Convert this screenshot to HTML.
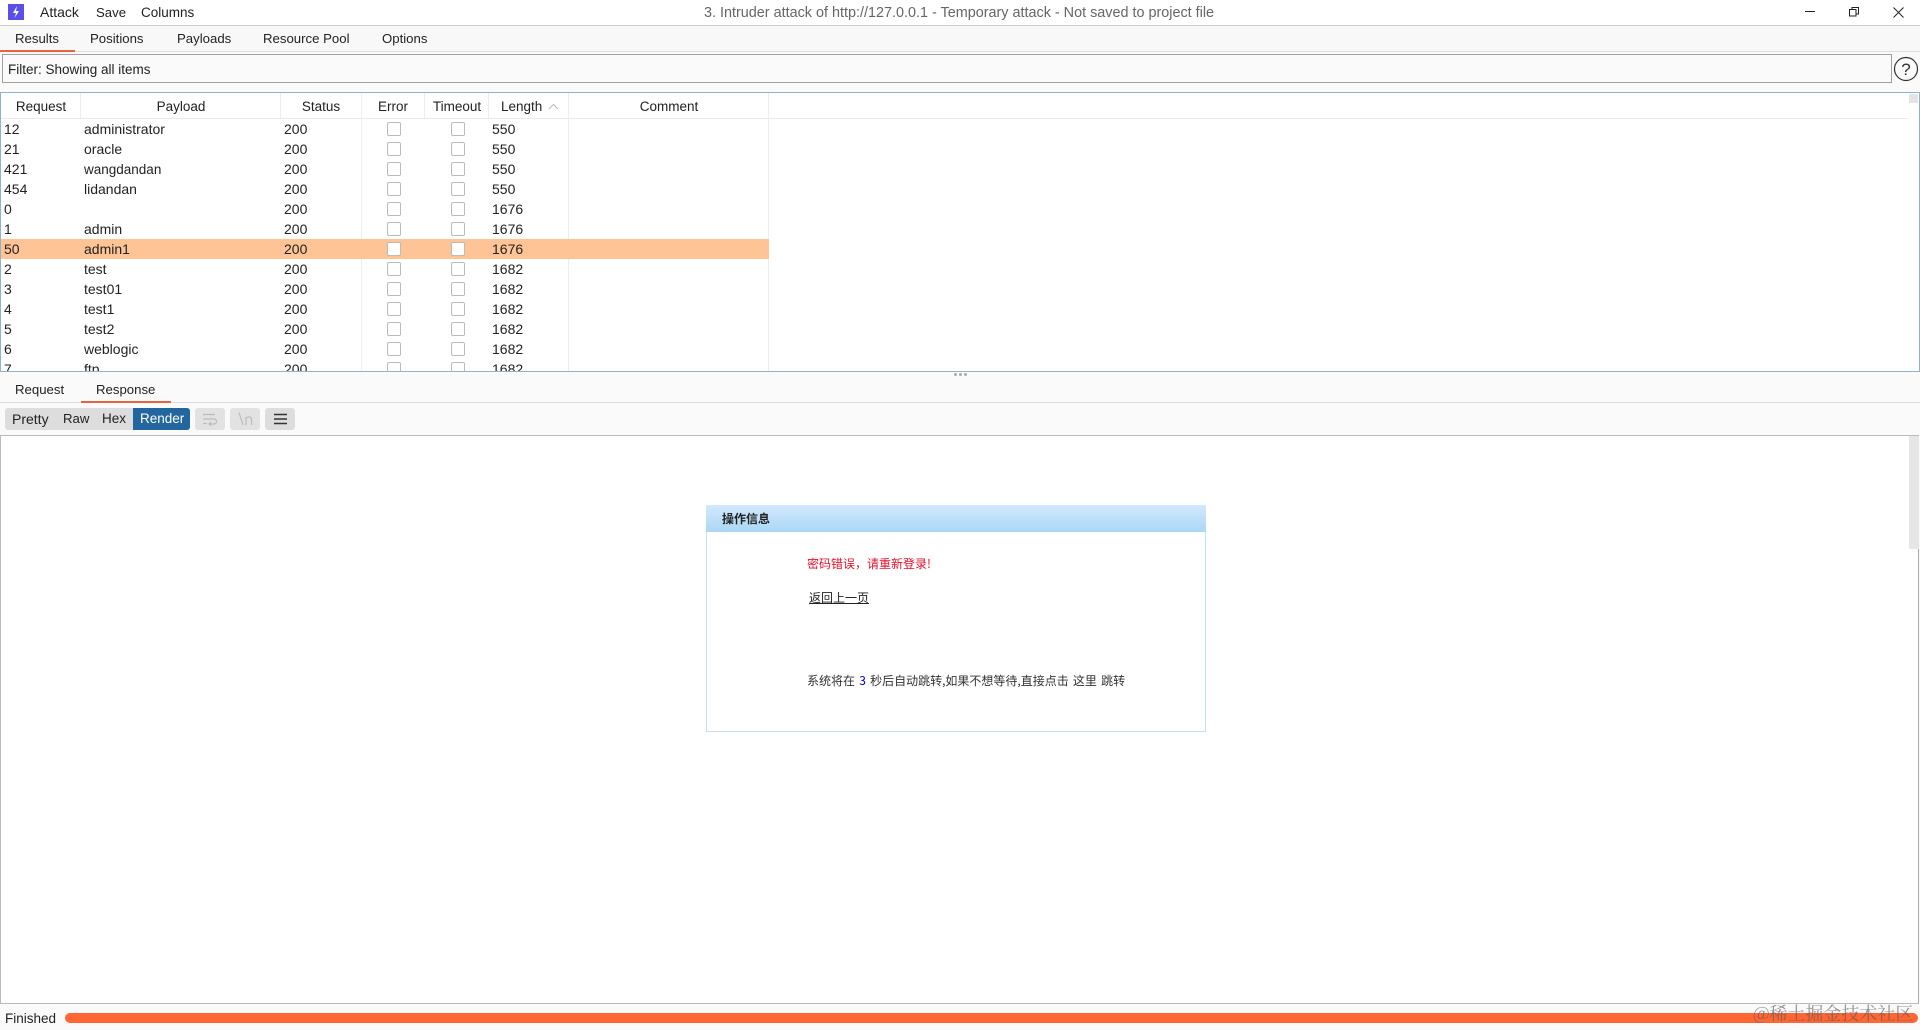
<!DOCTYPE html>
<html><head><meta charset="utf-8"><style>
html,body{margin:0;padding:0;width:1920px;height:1030px;overflow:hidden;background:#fafafa;font-family:"Liberation Sans","Noto Sans CJK SC",sans-serif;font-size:13.5px;color:#222}
.a{position:absolute}
.t{position:absolute;line-height:20px;white-space:nowrap;margin-top:1px}
.c{position:absolute;width:12px;height:12px;border:1px solid #bbb;border-radius:2px;background:#fff}
.h{position:absolute;line-height:20px;white-space:nowrap;transform:translateX(-50%);margin-top:1px;font-size:13.5px}
.v{position:absolute;width:1px;background:#eee}
.k{font-size:13.2px}
.z{margin-top:0}
.r .t{margin-top:0}
</style></head><body>
<div class="a" style="left:0;top:0;width:1920px;height:25px;background:#fff"></div>
<div class="a" style="left:0;top:25px;width:1920px;height:1px;background:#ccc"></div>
<svg class="a" style="left:8px;top:4px" width="16" height="16" viewBox="0 0 16 16"><rect width="16" height="16" fill="#5a4fe8"/><path d="M9 2 L5 9 L8 9 L6.5 14 L11 7 L8 7 Z" fill="#fff"/></svg>
<span class="t z" style="left:40px;top:2px;font-size:14px">Attack</span>
<span class="t" style="left:96px;top:2px;font-size:13.2px">Save</span>
<span class="t" style="left:141px;top:2px">Columns</span>
<span class="t" style="left:704px;top:2px;color:#666;font-size:14.4px">3. Intruder attack of http://127.0.0.1 - Temporary attack - Not saved to project file</span>
<svg class="a" style="left:1800px;top:0" width="120" height="26" viewBox="0 0 120 26" fill="none" stroke="#222" stroke-width="1"><path d="M5 11.5H15"/><path d="M49.5 9.5h6.5v6.5h-6.5z"/><path d="M52 9.5V7.5h6.5V14H56"/><path d="M93.5 7.5 L103.5 17.5 M103.5 7.5 L93.5 17.5"/></svg>

<div class="a" style="left:0;top:26px;width:1920px;height:25px;background:#f8f8f8"></div>
<span class="t k" style="left:15px;top:28px">Results</span>
<span class="t k" style="left:90px;top:28px">Positions</span>
<span class="t k" style="left:177px;top:28px">Payloads</span>
<span class="t k" style="left:263px;top:28px">Resource Pool</span>
<span class="t k" style="left:382px;top:28px">Options</span>
<div class="a" style="left:0;top:51px;width:1920px;height:1px;background:#ddd"></div>
<div class="a" style="left:0;top:50px;width:75px;height:2px;background:#e8643c"></div>

<div class="a" style="left:2px;top:54px;width:1888px;height:27px;border:1px solid #a0a0a0;background:#fafafa"></div>
<span class="t" style="left:8px;top:59px">Filter: Showing all items</span>
<svg class="a" style="left:1893px;top:56px" width="26" height="26" viewBox="0 0 26 26"><circle cx="13" cy="13" r="11.5" fill="none" stroke="#333" stroke-width="1.2"/><text x="13" y="19" font-size="17" text-anchor="middle" fill="#333" font-family="Liberation Sans">?</text></svg>

<!-- table -->
<div class="a" style="left:0;top:92px;width:1918px;height:278px;border:1px solid #8fb3c9;background:#fff;overflow:hidden"></div>
<div class="a r" style="left:1px;top:93px;width:1917px;height:278px;overflow:hidden;font-size:14px">
<div class="a" style="left:0;top:25px;width:1907px;height:1px;background:#eaeaea"></div>
<div class="v" style="left:79px;top:0;height:25px"></div>
<div class="v" style="left:279px;top:0;height:25px"></div>
<div class="v" style="left:360px;top:0;height:278px"></div>
<div class="v" style="left:423px;top:0;height:25px"></div>
<div class="v" style="left:487px;top:0;height:25px"></div>
<div class="v" style="left:567px;top:0;height:278px"></div>
<div class="v" style="left:767px;top:0;height:278px"></div>
<span class="h" style="left:40px;top:3px">Request</span>
<span class="h" style="left:180px;top:3px">Payload</span>
<span class="h" style="left:320px;top:3px">Status</span>
<span class="h" style="left:392px;top:3px">Error</span>
<span class="h" style="left:456px;top:3px">Timeout</span>
<span class="t" style="left:500px;top:4px;font-size:13.5px">Length</span>
<svg class="a" style="left:547px;top:10px" width="11" height="7" viewBox="0 0 11 7"><path d="M1 6 L5.5 1.5 L10 6" fill="none" stroke="#bbb"/></svg>
<span class="h" style="left:668px;top:3px">Comment</span>
<div class="a" style="left:1908px;top:1px;width:9px;height:9px;background:#e4e4e4"></div>

<div class="a" style="left:0;top:146px;width:768px;height:20px;background:#ffc496"></div>

<span class="t" style="left:3px;top:26px">12</span><span class="t" style="left:83px;top:26px">administrator</span><span class="t" style="left:283px;top:26px">200</span><span class="t" style="left:491px;top:26px">550</span><i class="c" style="left:386px;top:29px"></i><i class="c" style="left:450px;top:29px"></i>
<span class="t" style="left:3px;top:46px">21</span><span class="t" style="left:83px;top:46px">oracle</span><span class="t" style="left:283px;top:46px">200</span><span class="t" style="left:491px;top:46px">550</span><i class="c" style="left:386px;top:49px"></i><i class="c" style="left:450px;top:49px"></i>
<span class="t" style="left:3px;top:66px">421</span><span class="t" style="left:83px;top:67px;font-size:13.5px">wangdandan</span><span class="t" style="left:283px;top:66px">200</span><span class="t" style="left:491px;top:66px">550</span><i class="c" style="left:386px;top:69px"></i><i class="c" style="left:450px;top:69px"></i>
<span class="t" style="left:3px;top:86px">454</span><span class="t" style="left:83px;top:86px">lidandan</span><span class="t" style="left:283px;top:86px">200</span><span class="t" style="left:491px;top:86px">550</span><i class="c" style="left:386px;top:89px"></i><i class="c" style="left:450px;top:89px"></i>
<span class="t" style="left:3px;top:106px">0</span><span class="t" style="left:283px;top:106px">200</span><span class="t" style="left:491px;top:106px">1676</span><i class="c" style="left:386px;top:109px"></i><i class="c" style="left:450px;top:109px"></i>
<span class="t" style="left:3px;top:126px">1</span><span class="t" style="left:83px;top:126px">admin</span><span class="t" style="left:283px;top:126px">200</span><span class="t" style="left:491px;top:126px">1676</span><i class="c" style="left:386px;top:129px"></i><i class="c" style="left:450px;top:129px"></i>
<span class="t" style="left:3px;top:146px">50</span><span class="t" style="left:83px;top:146px">admin1</span><span class="t" style="left:283px;top:146px">200</span><span class="t" style="left:491px;top:146px">1676</span><i class="c" style="left:386px;top:149px"></i><i class="c" style="left:450px;top:149px"></i>
<span class="t" style="left:3px;top:166px">2</span><span class="t" style="left:83px;top:166px">test</span><span class="t" style="left:283px;top:166px">200</span><span class="t" style="left:491px;top:166px">1682</span><i class="c" style="left:386px;top:169px"></i><i class="c" style="left:450px;top:169px"></i>
<span class="t" style="left:3px;top:186px">3</span><span class="t" style="left:83px;top:186px">test01</span><span class="t" style="left:283px;top:186px">200</span><span class="t" style="left:491px;top:186px">1682</span><i class="c" style="left:386px;top:189px"></i><i class="c" style="left:450px;top:189px"></i>
<span class="t" style="left:3px;top:206px">4</span><span class="t" style="left:83px;top:206px">test1</span><span class="t" style="left:283px;top:206px">200</span><span class="t" style="left:491px;top:206px">1682</span><i class="c" style="left:386px;top:209px"></i><i class="c" style="left:450px;top:209px"></i>
<span class="t" style="left:3px;top:226px">5</span><span class="t" style="left:83px;top:226px">test2</span><span class="t" style="left:283px;top:226px">200</span><span class="t" style="left:491px;top:226px">1682</span><i class="c" style="left:386px;top:229px"></i><i class="c" style="left:450px;top:229px"></i>
<span class="t" style="left:3px;top:246px">6</span><span class="t" style="left:83px;top:246px">weblogic</span><span class="t" style="left:283px;top:246px">200</span><span class="t" style="left:491px;top:246px">1682</span><i class="c" style="left:386px;top:249px"></i><i class="c" style="left:450px;top:249px"></i>
<span class="t" style="left:3px;top:266px">7</span><span class="t" style="left:83px;top:266px">ftp</span><span class="t" style="left:283px;top:266px">200</span><span class="t" style="left:491px;top:266px">1682</span><i class="c" style="left:386px;top:269px"></i><i class="c" style="left:450px;top:269px"></i>
</div>
<div class="a" style="left:954px;top:373px;width:3px;height:3px;background:#aaa;border-radius:2px"></div>
<div class="a" style="left:959px;top:373px;width:3px;height:3px;background:#aaa;border-radius:2px"></div>
<div class="a" style="left:964px;top:373px;width:3px;height:3px;background:#aaa;border-radius:2px"></div>

<span class="t k" style="left:15px;top:379px">Request</span>
<span class="t k" style="left:96px;top:379px">Response</span>
<div class="a" style="left:0;top:402px;width:1920px;height:1px;background:#ddd"></div>
<div class="a" style="left:81px;top:401px;width:90px;height:2px;background:#e8643c"></div>

<div class="a" style="left:5px;top:408px;width:185px;height:22px;background:#ddd;border-radius:3px"></div>
<div class="a" style="left:133px;top:408px;width:57px;height:22px;background:#23669f;border-radius:0 3px 3px 0"></div>
<span class="t z" style="left:12px;top:409px;font-size:14px">Pretty</span>
<span class="t z" style="left:63px;top:409px;font-size:13.2px">Raw</span>
<span class="t z" style="left:102px;top:409px">Hex</span>
<span class="t z" style="left:140px;top:409px;color:#fff">Render</span>
<div class="a" style="left:195px;top:408px;width:30px;height:22px;background:#e2e2e2;border-radius:3px"></div>
<div class="a" style="left:230px;top:408px;width:30px;height:22px;background:#e2e2e2;border-radius:3px"></div>
<div class="a" style="left:265px;top:408px;width:30px;height:22px;background:#ddd;border-radius:3px"></div>
<svg class="a" style="left:195px;top:408px" width="100" height="22" viewBox="0 0 100 22" fill="none"><path d="M8 6.5H20M8 11H19a2.5 2.5 0 0 1 0 5H15M8 15.5H12M16 14l-2 2 2 2" stroke="#bbb" stroke-width="1.2"/><path d="M44 4.5L48 17M51 17V9M51 10.5c1-2 5.5-2.5 5.5 1V17" stroke="#bbb" stroke-width="1.2"/><path d="M79 6.5H92M79 11H92M79 15.5H92" stroke="#333" stroke-width="1.4"/></svg>

<!-- render pane -->
<div class="a" style="left:0;top:435px;width:1919px;height:569px;background:#fff;border-top:1px solid #bbb;border-bottom:1px solid #bbb;border-left:1px solid #bbb;border-right:1px solid #aaa;box-sizing:border-box"></div>
<div class="a" style="left:1909px;top:436px;width:10px;height:113px;background:#e6e6e6"></div>

<div class="a" style="left:706px;top:505px;width:498px;height:225px;border:1px solid #c5e0f2;background:#fff"></div>
<div class="a" style="left:706px;top:505px;width:500px;height:27px;background:linear-gradient(#d2e9fd,#aad7f5)"></div>
<span class="t z" style="left:722px;top:509px;font-size:12px;color:#222;font-weight:bold;font-family:'Noto Sans CJK SC',sans-serif">操作信息</span>
<span class="t z" style="left:807px;top:554px;font-size:12px;color:#e8102a;font-family:'Noto Sans CJK SC',sans-serif">密码错误，请重新登录!</span>
<span class="t" style="left:809px;top:587px;font-size:12px;color:#222;text-decoration:underline;font-family:'Noto Sans CJK SC',sans-serif">返回上一页</span>
<span class="t z" style="left:807px;top:671px;font-size:12px;color:#333;word-spacing:1.5px;font-family:'Noto Sans CJK SC',sans-serif">系统将在 <span style="color:#00c">3</span> 秒后自动跳转,如果不想等待,直接点击 这里 跳转</span>

<span class="t" style="left:5px;top:1008px">Finished</span>
<div class="a" style="left:65px;top:1013px;width:1853px;height:10px;background:#ff6633;border-radius:5px"></div>
<span class="t z" style="left:1753px;top:1002px;font-size:18px;line-height:22px;color:rgba(90,90,90,.65);font-family:'Noto Serif CJK SC',serif">@稀土掘金技术社区</span>
</body></html>
